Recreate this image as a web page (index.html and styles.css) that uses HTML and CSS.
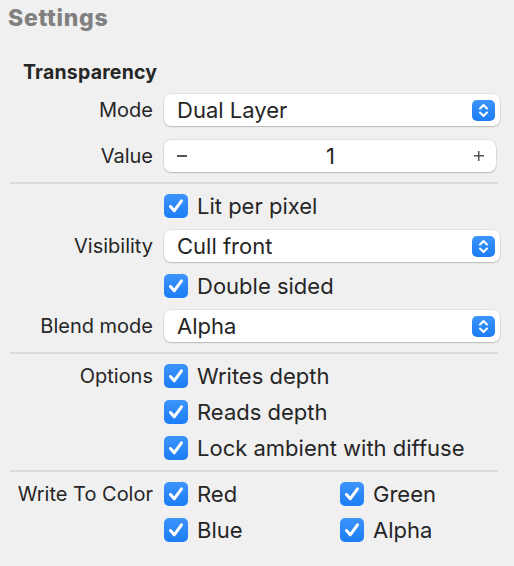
FILE: index.html
```html
<!DOCTYPE html>
<html>
<head>
<meta charset="utf-8">
<link rel="stylesheet" href="styles.css">
</head>
<body>
<div class="panel">
  <div class="title">Settings</div>
  <div class="heading">Transparency</div>
  <div class="section s1">
    <div class="row">
      <div class="label">Mode</div>
      <div class="popup"><span class="ptext">Dual Layer</span><span class="arrows"><svg width="23" height="21" viewBox="0 0 23 21"><path d="M8 8.5 L11.5 5 L15 8.5 M8 12.5 L11.5 16 L15 12.5" fill="none" stroke="#fff" stroke-width="2" stroke-linecap="round" stroke-linejoin="round"/></svg></span></div>
    </div>
    <div class="row">
      <div class="label">Value</div>
      <div class="stepper"><span class="minus"></span><span class="sval">1</span><span class="plus"></span></div>
    </div>
  </div>
  <div class="sep"></div>
  <div class="section s2">
    <div class="row">
      <div class="label"></div>
      <div class="check"><span class="box"><svg width="24" height="24" viewBox="0 0 24 24"><path d="M6.5 12.5 L10.2 16.8 L17.5 6.8" fill="none" stroke="#fff" stroke-width="3" stroke-linecap="round" stroke-linejoin="round"/></svg></span><span class="ctext">Lit per pixel</span></div>
    </div>
    <div class="row">
      <div class="label">Visibility</div>
      <div class="popup"><span class="ptext">Cull front</span><span class="arrows"><svg width="23" height="21" viewBox="0 0 23 21"><path d="M8 8.5 L11.5 5 L15 8.5 M8 12.5 L11.5 16 L15 12.5" fill="none" stroke="#fff" stroke-width="2" stroke-linecap="round" stroke-linejoin="round"/></svg></span></div>
    </div>
    <div class="row">
      <div class="label"></div>
      <div class="check"><span class="box"><svg width="24" height="24" viewBox="0 0 24 24"><path d="M6.5 12.5 L10.2 16.8 L17.5 6.8" fill="none" stroke="#fff" stroke-width="3" stroke-linecap="round" stroke-linejoin="round"/></svg></span><span class="ctext">Double sided</span></div>
    </div>
    <div class="row">
      <div class="label">Blend mode</div>
      <div class="popup"><span class="ptext">Alpha</span><span class="arrows"><svg width="23" height="21" viewBox="0 0 23 21"><path d="M8 8.5 L11.5 5 L15 8.5 M8 12.5 L11.5 16 L15 12.5" fill="none" stroke="#fff" stroke-width="2" stroke-linecap="round" stroke-linejoin="round"/></svg></span></div>
    </div>
  </div>
  <div class="sep"></div>
  <div class="section s3">
    <div class="row">
      <div class="label">Options</div>
      <div class="check"><span class="box"><svg width="24" height="24" viewBox="0 0 24 24"><path d="M6.5 12.5 L10.2 16.8 L17.5 6.8" fill="none" stroke="#fff" stroke-width="3" stroke-linecap="round" stroke-linejoin="round"/></svg></span><span class="ctext">Writes depth</span></div>
    </div>
    <div class="row">
      <div class="label"></div>
      <div class="check"><span class="box"><svg width="24" height="24" viewBox="0 0 24 24"><path d="M6.5 12.5 L10.2 16.8 L17.5 6.8" fill="none" stroke="#fff" stroke-width="3" stroke-linecap="round" stroke-linejoin="round"/></svg></span><span class="ctext">Reads depth</span></div>
    </div>
    <div class="row">
      <div class="label"></div>
      <div class="check"><span class="box"><svg width="24" height="24" viewBox="0 0 24 24"><path d="M6.5 12.5 L10.2 16.8 L17.5 6.8" fill="none" stroke="#fff" stroke-width="3" stroke-linecap="round" stroke-linejoin="round"/></svg></span><span class="ctext">Lock ambient with diffuse</span></div>
    </div>
  </div>
  <div class="sep"></div>
  <div class="section s4">
    <div class="row">
      <div class="label">Write To Color</div>
      <div class="cols">
        <div class="check"><span class="box"><svg width="24" height="24" viewBox="0 0 24 24"><path d="M6.5 12.5 L10.2 16.8 L17.5 6.8" fill="none" stroke="#fff" stroke-width="3" stroke-linecap="round" stroke-linejoin="round"/></svg></span><span class="ctext">Red</span></div>
        <div class="check"><span class="box"><svg width="24" height="24" viewBox="0 0 24 24"><path d="M6.5 12.5 L10.2 16.8 L17.5 6.8" fill="none" stroke="#fff" stroke-width="3" stroke-linecap="round" stroke-linejoin="round"/></svg></span><span class="ctext">Green</span></div>
      </div>
    </div>
    <div class="row">
      <div class="label"></div>
      <div class="cols">
        <div class="check"><span class="box"><svg width="24" height="24" viewBox="0 0 24 24"><path d="M6.5 12.5 L10.2 16.8 L17.5 6.8" fill="none" stroke="#fff" stroke-width="3" stroke-linecap="round" stroke-linejoin="round"/></svg></span><span class="ctext">Blue</span></div>
        <div class="check"><span class="box"><svg width="24" height="24" viewBox="0 0 24 24"><path d="M6.5 12.5 L10.2 16.8 L17.5 6.8" fill="none" stroke="#fff" stroke-width="3" stroke-linecap="round" stroke-linejoin="round"/></svg></span><span class="ctext">Alpha</span></div>
      </div>
    </div>
  </div>
</div>
</body>
</html>
```

FILE: styles.css
```css
html, body {
  margin: 0;
  padding: 0;
  background: #f0f0f0;
}
body {
  font-family: Inter, "Liberation Sans", sans-serif;
  color: #262626;
  font-size: 20px;
}
.panel {
  width: 514px;
  height: 566px;
  box-sizing: border-box;
  padding: 4px 14px 0 10px;
}
.title {
  font-size: 23px;
  font-weight: 800;
  color: #808080;
  line-height: 28px;
  letter-spacing: 0.7px;
  margin-left: -2px;
}
.heading {
  font-size: 19.5px;
  font-weight: 700;
  line-height: 24px;
  letter-spacing: 0.2px;
  margin: 28px 0 0 13px;
}
.section {
  display: flex;
  flex-direction: column;
}
.s1 {
  padding-top: 8px;
  padding-bottom: 8px;
  gap: 10px;
}
.s2 {
  padding-top: 4px;
  padding-bottom: 8px;
  gap: 4px;
}
.s3 {
  padding-top: 4px;
  padding-bottom: 4px;
}
.s4 {
  padding-top: 4px;
}
.sep {
  height: 2px;
  background: #dadada;
  margin-right: 2px;
}
.row {
  display: flex;
  align-items: center;
  height: 36px;
  gap: 11px;
}
.label {
  width: 143px;
  flex: none;
  text-align: right;
  white-space: nowrap;
}
.ptext, .ctext, .sval {
  font-size: 22px;
}
.popup {
  width: 336px;
  height: 32px;
  box-sizing: border-box;
  background: #fff;
  border-radius: 7px;
  box-shadow: 0 0 0 0.5px rgba(0,0,0,0.12), 0 1px 1.5px rgba(0,0,0,0.18);
  display: flex;
  align-items: center;
  justify-content: space-between;
  padding: 0 5px 0 13px;
}
.arrows {
  width: 23px;
  height: 21px;
  border-radius: 5px;
  background: linear-gradient(#3d94fb, #1c7df5);
  display: flex;
}
.stepper {
  width: 332px;
  height: 32px;
  box-sizing: border-box;
  background: #fff;
  border-radius: 7px;
  box-shadow: 0 0 0 0.5px rgba(0,0,0,0.12), 0 1px 1.5px rgba(0,0,0,0.18);
  display: flex;
  align-items: center;
  justify-content: space-between;
  padding: 0 12px 0 13px;
}
.minus {
  width: 10px;
  height: 1.5px;
  background: #555;
}
.plus {
  width: 10px;
  height: 10px;
  background: linear-gradient(#555, #555) center / 10px 1.5px no-repeat, linear-gradient(#555, #555) center / 1.5px 10px no-repeat;
}
.check {
  display: flex;
  align-items: center;
  gap: 9px;
  white-space: nowrap;
}
.box {
  width: 24px;
  height: 24px;
  border-radius: 5px;
  background: linear-gradient(#3d94fb, #1c7df5);
  display: flex;
  flex: none;
}
.cols {
  display: grid;
  grid-template-columns: 176px 1fr;
}
```
